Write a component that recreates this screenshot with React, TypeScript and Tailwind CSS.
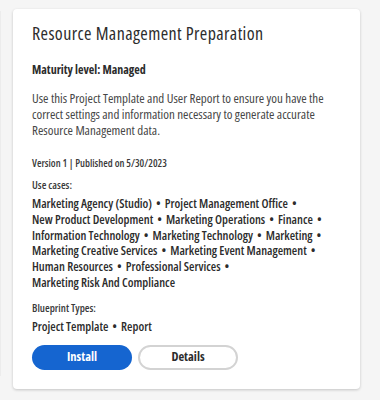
import React from "react";

const useCaseLines = [
  ["Marketing Agency (Studio)", "Project Management Office", ""],
  ["New Product Development", "Marketing Operations", "Finance", ""],
  ["Information Technology", "Marketing Technology", "Marketing", ""],
  ["Marketing Creative Services", "Marketing Event Management", ""],
  ["Human Resources", "Professional Services", ""],
  ["Marketing Risk And Compliance"],
];

function Line({ items }: { items: string[] }) {
  return (
    <div className="whitespace-nowrap h-[15.8px]">
      {items.map((t, i) => (
        <React.Fragment key={i}>
          {t}
          {i < items.length - 1 ? <span className="mx-[4px]">•</span> : null}
        </React.Fragment>
      ))}
    </div>
  );
}

export default function App() {
  return (
    <div className="w-[380px] h-[400px] bg-[#f5f5f5] pt-[9px] flex items-start font-['Open_Sans','Liberation_Sans',sans-serif] font-stretch-semi-condensed">
      <div className="w-[1px] h-[365px] mt-[2px] bg-[#ececec]" />
      <div className="ml-[12px] w-[347px] h-[380px] bg-white rounded-[4px] shadow-[0_1px_3px_rgba(0,0,0,0.2)] pt-[13px] pl-[19px] pr-[10px]">
        <h1 className="text-[18px] leading-[22px] text-[#2c2c2c] whitespace-nowrap tracking-[0.4px]">Resource Management Preparation</h1>
        <div className="mt-[18px] text-[12px] leading-[16px] font-bold text-[#2c2c2c]">Maturity level: Managed</div>
        <div className="mt-[11.5px] text-[13px] leading-[16px] text-[#464646]">
          <div className="whitespace-nowrap">Use this Project Template and User Report to ensure you have the</div>
          <div className="whitespace-nowrap">correct settings and information necessary to generate accurate</div>
          <div className="whitespace-nowrap">Resource Management data.</div>
        </div>
        <div className="mt-[18.5px] text-[10.4px] leading-[14px] font-semibold text-[#3a3a3a]">Version 1 | Published on 5/30/2023</div>
        <div className="mt-[8px] text-[10.8px] leading-[14px] font-semibold text-[#3a3a3a]">Use cases:</div>
        <div className="mt-[4px] text-[12.4px] leading-[15.8px] font-semibold text-[#2c2c2c]">
          {useCaseLines.map((l, i) => (
            <Line key={i} items={l} />
          ))}
        </div>
        <div className="mt-[10px] text-[10.8px] leading-[14px] font-semibold text-[#3a3a3a]">Blueprint Types:</div>
        <div className="mt-[4px] text-[12.4px] leading-[15.8px] font-semibold text-[#2c2c2c]">
          <Line items={["Project Template", "Report"]} />
        </div>
        <div className="mt-[10px] flex gap-[6px]">
          <button className="w-[100px] h-[25px] rounded-full bg-[#1565d0] text-white text-[12.5px] font-bold">Install</button>
          <button className="w-[100px] h-[25px] rounded-full border-2 border-[#d3d3d3] bg-white text-[#2c2c2c] text-[12.5px] font-bold">Details</button>
        </div>
      </div>
    </div>
  );
}
